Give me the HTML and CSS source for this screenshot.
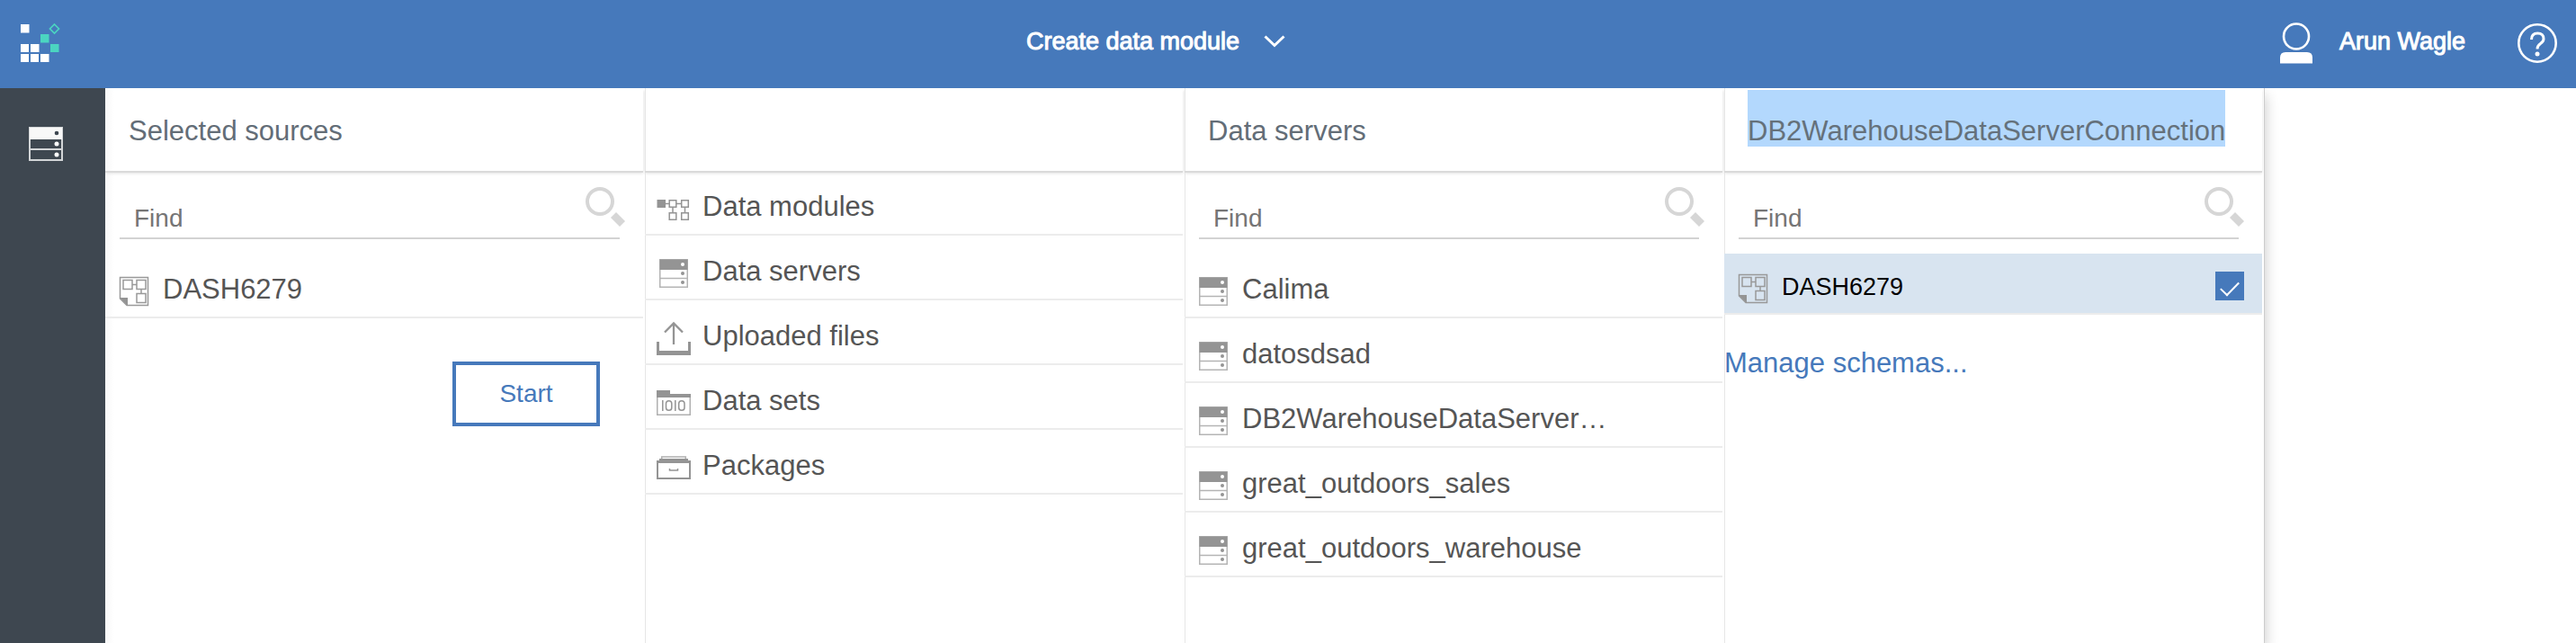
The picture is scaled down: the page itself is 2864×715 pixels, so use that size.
FILE: index.html
```html
<!DOCTYPE html>
<html lang="en">
<head>
<meta charset="utf-8">
<title>Create data module</title>
<link rel="stylesheet" href="styles.css">
</head>
<body>
<svg class="sprite" aria-hidden="true">
  <symbol id="server" viewBox="0 0 38 44">
    <rect x="3.75" y="9.75" width="30.5" height="30.5" fill="none" stroke="#b4b4b4" stroke-width="1.5"/>
    <path d="M3.5 9.5h31v11.500h-31z" fill="#949494"/>
    <path d="M3 30.500h32" stroke="#b4b4b4" stroke-width="1.5"/>
    <circle cx="29" cy="15" r="2" fill="#fff"/>
    <circle cx="29" cy="25" r="2" fill="#949494"/>
    <circle cx="29" cy="35" r="2" fill="#949494"/>
  </symbol>
  <symbol id="schema" viewBox="0 0 38 44">
    <path d="M3.500 33V9.500h31v31H11z" fill="none" stroke="#999" stroke-width="1.500"/>
    <path d="M3 32h9v9z" fill="#949494"/>
    <path d="M7 12.500h10v10H7zM22 12.500h10v10H22zM22 27.500h10V37.500H22zM17 17.500h5M27 22.500v5" fill="none" stroke="#999" stroke-width="1.500"/>
  </symbol>
  <symbol id="search" viewBox="0 0 44 44">
    <circle cx="16" cy="16" r="14" fill="none" stroke="#d6d6d6" stroke-width="4"/>
    <path d="M34 28l10 10-6 6-10-10z" fill="#d6d6d6"/>
  </symbol>
</svg>

<header class="topbar">
  <svg class="logo" viewBox="0 0 44 44" role="img" aria-label="Home">
    <path fill="#fff" d="M0 1h9.500v9.500H0zM0 23h9v9H0zM11 23h9.500v9H11zM0 34h9v9H0zM11 34h9v9h-9zM22 34h9.500v9H22z"/>
    <path fill="#4bd5c1" d="M22 12h9.500v9.500H22zM33 23h9.500v9H33z"/>
    <path fill="none" stroke="#4bd5c1" stroke-width="1.700" d="M37.500 1l5 5-5 5-5-5z"/>
  </svg>
  <div class="title-area">
    <button class="title" type="button">Create data module
      <svg class="chevron" viewBox="0 0 24 14" aria-hidden="true"><path d="M1.500 1.500L12 11.500l10.500-10" fill="none" stroke="#fff" stroke-width="3"/></svg>
    </button>
  </div>
  <div class="account">
    <button class="user" type="button">
      <svg class="avatar" viewBox="0 0 36 46" aria-hidden="true">
        <circle cx="18" cy="15.500" r="14" fill="none" stroke="#fff" stroke-width="2.600"/>
        <path d="M0 45.500V39q0-6 6-6h24q6 0 6 6v6.500z" fill="#fff"/>
      </svg>
      <span class="user-name">Arun Wagle</span>
    </button>
    <button class="help" type="button" aria-label="Help">
      <svg viewBox="0 0 44 44" aria-hidden="true">
        <circle cx="22" cy="22" r="20.700" fill="none" stroke="#fff" stroke-width="2.600"/>
        <path d="M15.500 18q0-7 6.800-7t6.700 6.200q0 3-3.500 5.300-3.500 2.300-3.500 6" fill="none" stroke="#fff" stroke-width="3"/>
        <circle cx="22" cy="34" r="2.500" fill="#fff"/>
      </svg>
    </button>
  </div>
</header>

<div class="workspace">
  <nav class="rail">
    <button class="rail-button" type="button" aria-label="Sources">
      <svg viewBox="0 0 38 38" aria-hidden="true">
        <path d="M1 1h36v36H1zM1 25h36" fill="none" stroke="#d2d5d7" stroke-width="2"/>
        <path d="M1 1h36v13H1z" fill="#f8f8f8"/>
        <circle cx="31" cy="7" r="2.300" fill="#3e4750"/>
        <circle cx="31" cy="19" r="2.500" fill="#fff"/>
        <circle cx="31" cy="31" r="2.500" fill="#fff"/>
      </svg>
    </button>
  </nav>

  <main class="panel">
    <section class="column">
      <h2 class="column-title">Selected sources</h2>
      <div class="find">
        <input class="find-input" type="search" placeholder="Find" aria-label="Find selected sources">
        <svg class="find-icon" aria-hidden="true"><use href="#search"/></svg>
      </div>
      <ul class="list">
        <li><button class="row" type="button"><svg class="icon" aria-hidden="true"><use href="#schema"/></svg><span class="row-label">DASH6279</span></button></li>
      </ul>
      <button class="start" type="button">Start</button>
    </section>

    <section class="column">
      <h2 class="column-title"></h2>
      <ul class="list">
        <li><button class="row" type="button">
          <svg class="icon" viewBox="0 0 38 44" aria-hidden="true">
            <path d="M.500 15h9.500v9H.500z" fill="#949494"/>
            <path d="M10 19.500h4M22 19.500h5M18 24v5M31.500 24v5M14.200 15.700h7.600v7.600h-7.600zM27.700 15.700h7.600v7.600h-7.600zM14.200 29.700h7.600v7.600h-7.600zM27.700 29.700h7.600v7.600h-7.600z" fill="none" stroke="#949494" stroke-width="1.500"/>
          </svg><span class="row-label">Data modules</span></button></li>
        <li><button class="row" type="button"><svg class="icon" aria-hidden="true"><use href="#server"/></svg><span class="row-label">Data servers</span></button></li>
        <li><button class="row" type="button">
          <svg class="icon" viewBox="0 0 38 44" aria-hidden="true">
            <path d="M19 32V9M9 18.500L19 8.500l10 10" fill="none" stroke="#949494" stroke-width="2.300"/>
            <path d="M0 29h3v10h32V29h3v15H0z" fill="#949494"/>
          </svg><span class="row-label">Uploaded files</span></button></li>
        <li><button class="row" type="button">
          <svg class="icon" viewBox="0 0 38 44" aria-hidden="true">
            <path d="M.750 17v21.250h36.500V17" fill="none" stroke="#b0b0b0" stroke-width="1.500"/>
            <path d="M0 11h15v4h23v4H0z" fill="#949494"/>
            <path d="M6.800 22v12M20.800 22v12" stroke="#949494" stroke-width="1.500"/>
            <rect x="10.500" y="22.700" width="6.300" height="10.600" rx="3.100" fill="none" stroke="#949494" stroke-width="1.500"/>
            <rect x="24.700" y="22.700" width="6.300" height="10.600" rx="3.100" fill="none" stroke="#949494" stroke-width="1.500"/>
          </svg><span class="row-label">Data sets</span></button></li>
        <li><button class="row" type="button">
          <svg class="icon" viewBox="0 0 38 44" aria-hidden="true">
            <path d="M5.700 16v-3h26.600v3" fill="none" stroke="#b0b0b0" stroke-width="1.500"/>
            <path d="M3 15h32v2h3v3H0v-3h3z" fill="#949494"/>
            <path d="M1 18v19h36V18" fill="none" stroke="#949494" stroke-width="2"/>
            <path d="M14.500 26v2h9v-2" fill="none" stroke="#949494" stroke-width="1.500"/>
          </svg><span class="row-label">Packages</span></button></li>
      </ul>
    </section>

    <section class="column">
      <h2 class="column-title">Data servers</h2>
      <div class="find">
        <input class="find-input" type="search" placeholder="Find" aria-label="Find data servers">
        <svg class="find-icon" aria-hidden="true"><use href="#search"/></svg>
      </div>
      <ul class="list">
        <li><button class="row" type="button"><svg class="icon" aria-hidden="true"><use href="#server"/></svg><span class="row-label">Calima</span></button></li>
        <li><button class="row" type="button"><svg class="icon" aria-hidden="true"><use href="#server"/></svg><span class="row-label">datosdsad</span></button></li>
        <li><button class="row" type="button"><svg class="icon" aria-hidden="true"><use href="#server"/></svg><span class="row-label">DB2WarehouseDataServer…</span></button></li>
        <li><button class="row" type="button"><svg class="icon" aria-hidden="true"><use href="#server"/></svg><span class="row-label">great_outdoors_sales</span></button></li>
        <li><button class="row" type="button"><svg class="icon" aria-hidden="true"><use href="#server"/></svg><span class="row-label">great_outdoors_warehouse</span></button></li>
      </ul>
    </section>

    <section class="column">
      <h2 class="column-title"><span class="highlight">DB2WarehouseDataServerConnection</span></h2>
      <div class="find">
        <input class="find-input" type="search" placeholder="Find" aria-label="Find schemas">
        <svg class="find-icon" aria-hidden="true"><use href="#search"/></svg>
      </div>
      <ul class="list">
        <li><label class="row row-selected" for="schema-dash"><svg class="icon" aria-hidden="true"><use href="#schema"/></svg><span class="row-label">DASH6279</span><input class="check" type="checkbox" id="schema-dash" checked></label></li>
      </ul>
      <a class="manage" href="#">Manage schemas...</a>
    </section>
  </main>
</div>
</body>
</html>
```

FILE: styles.css
```css
* {
  box-sizing: border-box;
}

body {
  margin: 0;
  min-height: 100vh;
  display: flex;
  flex-direction: column;
  background: #fff;
  color: #555;
  font-family: "Liberation Sans", Arial, sans-serif;
  font-size: 31px;
  line-height: 36px;
}

button,
input {
  font: inherit;
  color: inherit;
  border: 0;
  margin: 0;
  padding: 0;
  background: none;
  border-radius: 0;
}

.sprite {
  position: absolute;
  width: 0;
  height: 0;
}

/* Top bar */
.topbar {
  display: flex;
  align-items: center;
  height: 98px;
  padding: 0 21px 2px 23px;
  background: #4679bb;
  color: #fff;
  font-size: 27px;
}

.logo {
  width: 44px;
  height: 44px;
}

.title-area {
  flex: 1;
  display: flex;
  justify-content: center;
}

.title {
  display: flex;
  align-items: center;
  gap: 27px;
  padding-bottom: 4px;
  -webkit-text-stroke: 1px #fff;
}

.chevron {
  width: 24px;
  height: 14px;
}

.account {
  display: flex;
  align-items: center;
  gap: 58px;
  padding-left: 32px;
}

.user {
  display: flex;
  align-items: center;
  gap: 30px;
}

.user-name {
  padding-bottom: 4px;
  -webkit-text-stroke: 1px #fff;
}

.avatar {
  width: 36px;
  height: 46px;
}

.help,
.help svg {
  display: block;
  width: 44px;
  height: 44px;
}

/* Body */
.workspace {
  flex: 1;
  display: flex;
}

.rail {
  flex: none;
  width: 117px;
  padding: 43px 32px;
  background: #3e4750;
}

.rail-button,
.rail-button svg {
  display: block;
  width: 38px;
  height: 38px;
}

.panel {
  flex: 1;
  display: grid;
  grid-template-columns: repeat(4, minmax(0, 600px));
  max-width: 2400px;
  box-shadow: 1px 0 0 #ccc, 2px 8px 14px rgba(0, 0, 0, 0.2);
  clip-path: inset(0 -24px 0 0);
}

.column {
  padding-right: 2px;
  background: linear-gradient(#e6e6e6, #e6e6e6) left / 1px 100% no-repeat #fff;
}

.column:first-child {
  background: linear-gradient(90deg, #f8f8f8, #fff) left / 10px 100% no-repeat #fff;
}

.column-title {
  height: 92px;
  margin: 0;
  padding: 30px 26px 0;
  box-shadow: 0 2px 0 #dadada, 0 3px 3px #e4e4e4;
  color: #636d77;
  font-size: 31px;
  font-weight: 400;
  white-space: nowrap;
}

.highlight {
  padding-top: 28px;
  background: #b3d8fd;
  color: #65717b;
}

.find {
  position: relative;
  padding: 30px 26px 16px 16px;
}

.find-input {
  display: block;
  width: 100%;
  height: 46px;
  padding: 2px 52px 0 16px;
  border-bottom: 2px solid #d3d3d3;
  font-size: 28px;
  outline: 0;
  appearance: none;
}

.find-input::placeholder {
  color: #757575;
  opacity: 1;
}

.find-icon {
  position: absolute;
  top: 18px;
  right: 20px;
  width: 44px;
  height: 44px;
}

.list {
  margin: 0;
  padding: 0;
  list-style: none;
}

.row {
  display: flex;
  align-items: center;
  gap: 13px;
  width: 100%;
  height: 72px;
  padding: 8px 20px 0 13px;
  border-bottom: 2px solid #ececec;
  text-align: left;
}

.row-label {
  flex: 1;
  padding-top: 2px;
  white-space: nowrap;
}

.icon {
  flex: none;
  width: 38px;
  height: 44px;
}

.row-selected {
  height: 68px;
  padding-top: 6px;
  background: #d8e4f0;
  background-clip: padding-box;
  color: #000;
  font-size: 27px;
}

.check {
  display: grid;
  place-items: center;
  width: 32px;
  height: 32px;
  background: #4679bb;
  appearance: none;
}

.check:checked::before {
  content: "";
  width: 18px;
  height: 9px;
  border: solid #fff;
  border-width: 0 0 2px 2px;
  rotate: -46deg;
}

.start {
  display: block;
  width: 164px;
  height: 72px;
  margin: 48px 48px 0 auto;
  border: 4px solid #4679bb;
  color: #4679bb;
  font-size: 28px;
}

.manage {
  display: inline-block;
  margin-top: 36px;
  color: #4679bb;
  text-decoration: none;
}
```
